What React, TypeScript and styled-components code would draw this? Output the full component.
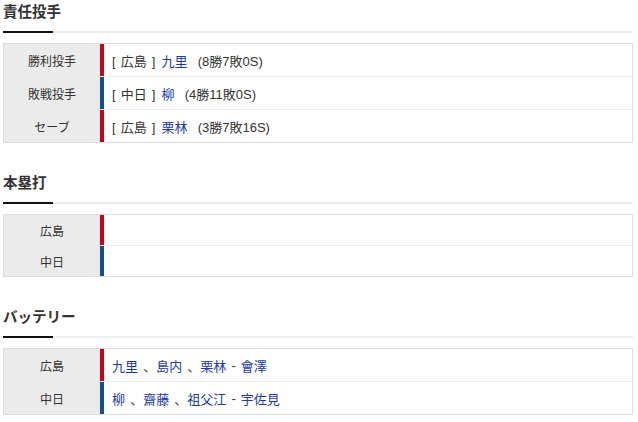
import * as React from 'react'
import styled, { createGlobalStyle } from 'styled-components'

const GlobalStyle = createGlobalStyle`
  body {
    margin: 0;
    background: #fff;
    font-family: 'Liberation Sans', 'Noto Sans CJK JP', sans-serif;
    color: #333;
  }
`

const Page = styled.div`
  padding: 0 5px 0 3px;
`

const Section = styled.section`
  & + & {
    margin-top: 28px;
  }
`

const Heading = styled.h2`
  position: relative;
  margin: 0;
  padding-bottom: 7px;
  font-size: 14.5px;
  line-height: 24px;
  font-weight: bold;
  color: #333;
  border-bottom: 2px solid #eee;

  &::after {
    content: '';
    position: absolute;
    left: 0;
    bottom: -2px;
    width: 50px;
    height: 2px;
    background: #111;
  }
`

const Table = styled.div`
  margin-top: 10px;
  border: 1px solid #ddd;
`

const Row = styled.div<{ $height: number }>`
  display: grid;
  grid-template-columns: 96px 1fr;
  height: ${({ $height }) => $height}px;

  & + & {
    border-top: 1px solid #eee;
  }
`

const Label = styled.div`
  display: flex;
  align-items: center;
  justify-content: center;
  background: #ebebeb;
  font-size: 12px;
  color: #333;
`

const Value = styled.div<{ $team: Team }>`
  display: flex;
  align-items: center;
  padding-left: 8px;
  border-left: 4px solid
    ${({ $team }) => ($team === 'carp' ? '#c4001d' : '#134e8e')};
  font-size: 13px;
  word-spacing: 1.5px;
  color: #333;
  white-space: pre;
`

const TeamTag = styled.span`
  margin-right: 6px;
`

const Player = styled.span`
  color: #1a3aa8;
`

type Team = 'carp' | 'dragons'

const pitchers: { role: string; team: Team; teamName: string; name: string; record: string }[] = [
  { role: '勝利投手', team: 'carp', teamName: '広島', name: '九里', record: '(8勝7敗0S)' },
  { role: '敗戦投手', team: 'dragons', teamName: '中日', name: '柳', record: '(4勝11敗0S)' },
  { role: 'セーブ', team: 'carp', teamName: '広島', name: '栗林', record: '(3勝7敗16S)' },
]

const battery: { team: Team; teamName: string; pitchers: string[]; catcher: string }[] = [
  { team: 'carp', teamName: '広島', pitchers: ['九里', '島内', '栗林'], catcher: '會澤' },
  { team: 'dragons', teamName: '中日', pitchers: ['柳', '齋藤', '祖父江'], catcher: '宇佐見' },
]

const App = () => {
  return (
    <Page>
      <GlobalStyle />

      <Section>
        <Heading>責任投手</Heading>
        <Table>
          {pitchers.map((p) => (
            <Row key={p.role} $height={32}>
              <Label>{p.role}</Label>
              <Value $team={p.team}>
                <TeamTag>{`[ ${p.teamName} ]`}</TeamTag>
                <Player>{p.name}</Player>
                {`  ${p.record}`}
              </Value>
            </Row>
          ))}
        </Table>
      </Section>

      <Section>
        <Heading>本塁打</Heading>
        <Table>
          <Row $height={30}>
            <Label>広島</Label>
            <Value $team="carp" />
          </Row>
          <Row $height={30}>
            <Label>中日</Label>
            <Value $team="dragons" />
          </Row>
        </Table>
      </Section>

      <Section>
        <Heading>バッテリー</Heading>
        <Table>
          {battery.map((b) => (
            <Row key={b.teamName} $height={32}>
              <Label>{b.teamName}</Label>
              <Value $team={b.team}>
                {b.pitchers.map((name, i) => (
                  <React.Fragment key={name}>
                    {i > 0 && ' 、'}
                    <Player>{name}</Player>
                  </React.Fragment>
                ))}
                {' - '}
                <Player>{b.catcher}</Player>
              </Value>
            </Row>
          ))}
        </Table>
      </Section>
    </Page>
  )
}

export default App
